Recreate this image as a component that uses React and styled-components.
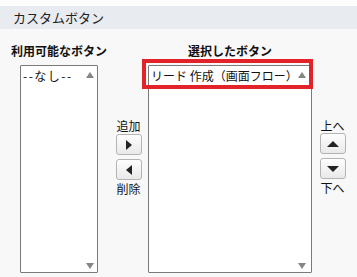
import React from 'react'
import styled, { createGlobalStyle } from 'styled-components'

const Global = createGlobalStyle`
  html, body { margin: 0; padding: 0; }
  body {
    background: #f8f8f8;
    font-family: "Noto Sans CJK JP", "DejaVu Sans", sans-serif;
    color: #111;
  }
`

const Page = styled.div({
  width: '357px',
  height: '277px',
  background: '#f8f8f8',
  overflow: 'hidden',
})
const TopGap = styled.div({
  height: '6px',
  background: '#fdfdfd',
})
const SectionHeader = styled.div({
  height: '23px',
  lineHeight: '23px',
  paddingLeft: '13px',
  background: '#e8ebf0',
  fontSize: '13px',
  color: '#222',
})
const Content = styled.div({
  display: 'flex',
  flexDirection: 'row',
  alignItems: 'flex-start',
  padding: '11px 0 0 20px',
})
const ListColumn = styled.div(({ width, left }) => ({
  position: 'relative',
  display: 'flex',
  flexDirection: 'column',
  alignItems: 'center',
  width: `${width}px`,
  flexShrink: 0,
  marginLeft: `${left || 0}px`,
}))
const Label = styled.div({
  marginTop: '3px',
  marginBottom: '6px',
  lineHeight: '16px',
  fontSize: '12px',
  fontWeight: 'bold',
  whiteSpace: 'nowrap',
})
const ListBox = styled.div({
  boxSizing: 'border-box',
  width: '100%',
  height: '208px',
  display: 'flex',
  flexDirection: 'row',
  background: '#fff',
  border: '1px solid #7a7a7a',
  borderRadius: '1px',
})
const Items = styled.div({
  flex: 1,
  minWidth: 0,
  overflow: 'hidden',
  padding: '2px 2px',
})
const Item = styled.div(({ spacing }) => ({
  fontSize: '12px',
  lineHeight: '15px',
  letterSpacing: `${spacing || 0}px`,
  whiteSpace: 'nowrap',
}))
const ScrollBar = styled.div(({ right }) => ({
  flexShrink: 0,
  display: 'flex',
  flexDirection: 'column',
  justifyContent: 'space-between',
  padding: `6px ${right}px 3px 0`,
}))
const ScrollArrow = styled.div(({ down }) => ({
  width: 0,
  height: 0,
  borderLeft: '4.5px solid transparent',
  borderRight: '4.5px solid transparent',
  [down ? 'borderTop' : 'borderBottom']: '6px solid #858585',
}))
const Highlight = styled.div({
  position: 'absolute',
  left: '-6px',
  top: '19px',
  width: '171px',
  height: '30px',
  boxSizing: 'border-box',
  border: '4px solid #e2232a',
  pointerEvents: 'none',
})
const ButtonColumn = styled.div(({ left }) => ({
  display: 'flex',
  flexDirection: 'column',
  alignItems: 'center',
  width: '27px',
  flexShrink: 0,
  marginLeft: `${left}px`,
  paddingTop: '79px',
}))
const Caption = styled.div({
  fontSize: '12px',
  lineHeight: '14px',
  whiteSpace: 'nowrap',
})
const ArrowButton = styled.div(({ gap }) => ({
  boxSizing: 'border-box',
  width: '26px',
  height: '21px',
  margin: `${gap}px 0 2px`,
  display: 'flex',
  alignItems: 'center',
  justifyContent: 'center',
  border: '1px solid #b4b4b4',
  borderRadius: '3px',
  background: 'linear-gradient(#fefefe, #e9e9e9)',
}))
const Triangle = styled.div(({ dir }) => {
  const side = { right: 'borderLeft', left: 'borderRight', up: 'borderBottom', down: 'borderTop' }[dir]
  const horizontal = dir === 'left' || dir === 'right'
  return horizontal
    ? {
        width: 0,
        height: 0,
        borderTop: '5px solid transparent',
        borderBottom: '5px solid transparent',
        [side]: '6px solid #222',
      }
    : {
        width: 0,
        height: 0,
        borderLeft: '6px solid transparent',
        borderRight: '6px solid transparent',
        [side]: '6px solid #222',
      }
})

const List = ({ items, right, spacing }) => (
  <ListBox>
    <Items>
      {items.map((text) => (
        <Item key={text} spacing={spacing}>{text}</Item>
      ))}
    </Items>
    <ScrollBar right={right}>
      <ScrollArrow />
      <ScrollArrow down />
    </ScrollBar>
  </ListBox>
)

const App = () => (
  <Page>
    <Global />
    <TopGap />
    <SectionHeader>カスタムボタン</SectionHeader>
    <Content>
      <ListColumn width={78}>
        <Label>利用可能なボタン</Label>
        <List items={['--なし--']} right={3} spacing={1.5} />
      </ListColumn>
      <ButtonColumn left={17}>
        <Caption>追加</Caption>
        <ArrowButton gap={1}>
          <Triangle dir="right" />
        </ArrowButton>
        <ArrowButton gap={2}>
          <Triangle dir="left" />
        </ArrowButton>
        <Caption>削除</Caption>
      </ButtonColumn>
      <ListColumn width={164} left={6}>
        <Label>選択したボタン</Label>
        <List items={['リード 作成（画面フロー）']} right={5} />
        <Highlight />
      </ListColumn>
      <ButtonColumn left={7}>
        <Caption>上へ</Caption>
        <ArrowButton gap={0}>
          <Triangle dir="up" />
        </ArrowButton>
        <ArrowButton gap={2}>
          <Triangle dir="down" />
        </ArrowButton>
        <Caption>下へ</Caption>
      </ButtonColumn>
    </Content>
  </Page>
)

export default App
